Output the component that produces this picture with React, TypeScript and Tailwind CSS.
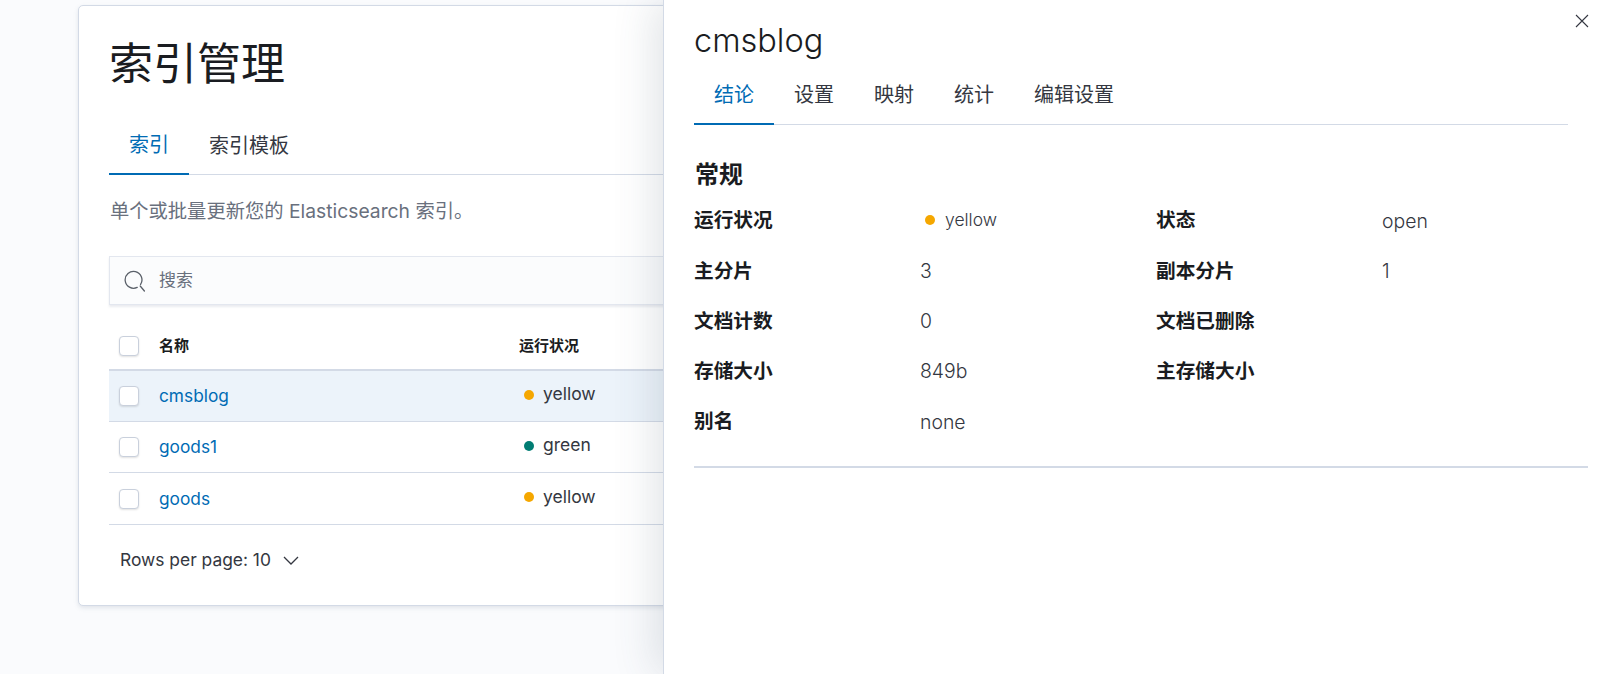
import React from 'react';

const font = "font-['Inter','Noto_Sans_CJK_SC',sans-serif]";

function Dot({ color }: { color: string }) {
    return <span className={`inline-block h-2.5 w-2.5 rounded-full ${color}`} />;
}

function Checkbox() {
    return <span className="block h-5 w-5 rounded-[4px] border border-[#c9d0dc] bg-white shadow-[0_1px_2px_rgba(0,0,0,0.12)]" />;
}

const rows = [
    { name: 'cmsblog', health: 'yellow', dot: 'bg-[#f5a700]', bg: 'bg-[#ecf3fa]', height: 'h-[51px]' },
    { name: 'goods1', health: 'green', dot: 'bg-[#017d73]', bg: 'bg-white', height: 'h-[51px]' },
    { name: 'goods', health: 'yellow', dot: 'bg-[#f5a700]', bg: 'bg-white', height: 'h-[52px]' },
];

const details = [
    ['运行状况', 'yellow', '状态', 'open'],
    ['主分片', '3', '副本分片', '1'],
    ['文档计数', '0', '文档已删除', ''],
    ['存储大小', '849b', '主存储大小', ''],
    ['别名', 'none', '', ''],
];

function IndexCard() {
    return (
        <div className="h-[601px] w-[1400px] rounded-[5px] border border-[#d3dae6] bg-white pl-[30px] pt-[27px] shadow-[0_2px_4px_rgba(152,162,179,0.25)]">
            <h1 className="text-[44px] leading-[62px] font-normal text-[#1a1c21]">索引管理</h1>

            <div className="mt-[22px] flex h-[58px] border-b border-[#d3dae6] text-[20px]">
                <div className="flex w-[80px] -mb-px items-center justify-center border-b-2 border-[#006bb4] text-[#006bb4]">索引</div>
                <div className="flex items-center pl-5 pr-5 text-[#343741]">索引模板</div>
            </div>

            <p className="mt-[23px] pl-px text-[19.3px] leading-[27px] text-[#69707d]">单个或批量更新您的 Elasticsearch 索引。</p>

            <div className="mt-[31px] flex h-[49px] items-center border border-[#e3e7ef] bg-[#fbfcfd] pl-[14px] shadow-[0_2px_2px_rgba(152,162,179,0.2)]">
                <svg width="22" height="22" viewBox="0 0 22 22" fill="none" stroke="#5a6069" strokeWidth="1.3" strokeLinecap="round">
                    <path d="M13.2 17.4A8.4 8.4 0 1 1 16.6 14.4" />
                    <path d="M16.2 16L20.4 21" />
                </svg>
                <span className="ml-[13px] text-[17px] text-[#69707d]">搜索</span>
            </div>

            <div className="mt-[18px] flex h-[48px] items-center border-b-2 border-[#d3dae6] pl-[10px]">
                <Checkbox />
                <span className="ml-[20px] w-[360px] text-[15px] font-bold text-[#1a1c21]">名称</span>
                <span className="text-[15px] font-bold text-[#1a1c21]">运行状况</span>
            </div>

            {rows.map((row) => (
                <div key={row.name} className={`flex items-center border-b border-[#d3dae6] pl-[10px] ${row.bg} ${row.height}`}>
                    <Checkbox />
                    <a className="ml-[20px] w-[365px] text-[17.3px] text-[#006bb4]">{row.name}</a>
                    <div className="flex items-center pb-[3px] text-[17.5px] text-[#343741]">
                        <Dot color={row.dot} />
                        <span className="ml-[9px]">{row.health}</span>
                    </div>
                </div>
            ))}

            <div className="mt-[21px] flex items-center pl-[11px] text-[17.4px] leading-[27px] text-[#343741]">
                <span>Rows per page: 10</span>
                <svg className="ml-[12px]" width="16" height="16" viewBox="0 0 16 16" fill="none" stroke="#343741" strokeWidth="1.3">
                    <path d="M1 5L8 12L15 5" />
                </svg>
            </div>
        </div>
    );
}

function Flyout() {
    return (
        <div className="absolute inset-y-0 right-0 w-[948px] border-l border-[#d3dae6] bg-white pl-[30px] pt-[19px] shadow-[-8px_0_40px_rgba(65,78,101,0.16)]">
            <button className="absolute right-[22px] top-[14px] text-[#343741]">
                <svg width="14" height="14" viewBox="0 0 14 14" fill="none" stroke="currentColor" strokeWidth="1.1">
                    <path d="M1 1L13 13M13 1L1 13" />
                </svg>
            </button>

            <h2 className="text-[32.5px] leading-[44px] font-light text-[#1a1c21]">cmsblog</h2>

            <div className="mt-[15px] flex h-[47px] w-[874px] border-b border-[#d3dae6] text-[20px] text-[#343741]">
                <div className="-mb-px flex w-[80px] items-center justify-center border-b-2 border-[#006bb4] pb-3 text-[#006bb4]">结论</div>
                {['设置', '映射', '统计', '编辑设置'].map((tab) => (
                    <div key={tab} className="flex items-center px-5 pb-3">{tab}</div>
                ))}
            </div>

            <h3 className="mt-[34px] pl-px text-[24px] leading-[32px] font-semibold text-[#1a1c21]">常规</h3>

            <div className="mt-[5px] w-[894px] border-b-2 border-[#d3dae6] pb-[19px]">
                {details.map(([label, value, label2, value2]) => (
                    <div key={label} className="grid h-[50.25px] grid-cols-[226px_236px_226px_1fr] items-center text-[19.7px]">
                        <span className="font-bold text-[#1a1c21]">{label}</span>
                        {value === 'yellow' ? (
                            <span className="flex items-center pb-[3px] pl-[5px] text-[17.5px] font-light text-[#343741]">
                                <Dot color="bg-[#f5a700]" />
                                <span className="ml-[10px]">{value}</span>
                            </span>
                        ) : (
                            <span className="text-[19.4px] font-light text-[#343741]">{value}</span>
                        )}
                        <span className="font-bold text-[#1a1c21]">{label2}</span>
                        <span className="text-[19.4px] font-light text-[#343741]">{value2}</span>
                    </div>
                ))}
            </div>
        </div>
    );
}

export default function App() {
    return (
        <div className={`relative h-screen w-full overflow-hidden bg-[#fafbfd] pl-[78px] pt-[5px] ${font}`}>
            <IndexCard />
            <Flyout />
        </div>
    );
}
